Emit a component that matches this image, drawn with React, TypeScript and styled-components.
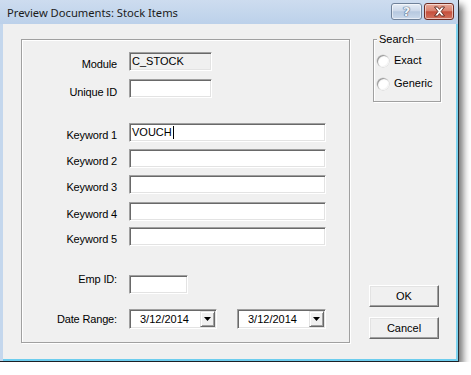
import React from 'react'
import styled, { createGlobalStyle } from 'styled-components'

const GlobalStyle = createGlobalStyle`
    html, body {
        margin: 0;
        padding: 0;
        background: #fff;
    }
    body {
        font-family: "Liberation Sans", Arial, sans-serif;
        font-size: 11px;
        color: #000;
    }
`

const Window = styled.div`
    width: 459px;
    height: 362px;
    box-sizing: border-box;
    display: flex;
    flex-direction: column;
    background: #c4d7ed;
    border-right: 1px solid #2a2f36;
    border-bottom: 1px solid #1c2026;
    box-shadow: 4px 5px 7px rgba(0, 0, 0, 0.55);
`

const TitleBar = styled.div`
    height: 24px;
    flex: none;
    display: flex;
    align-items: flex-start;
    padding: 0 4px 0 7px;
    background: linear-gradient(#cddcef, #bcd1ea);
`

const Title = styled.div`
    font-family: "Noto Sans", "Open Sans", sans-serif;
    font-size: 11.2px;
    line-height: 25px;
    color: #1b1b1b;
`

const CaptionButtons = styled.div`
    margin-left: auto;
    margin-top: 3px;
    display: flex;
    gap: 2px;
`

const CaptionButton = styled.div<{ $close?: boolean }>`
    width: ${p => p.$close ? 30 : 31}px;
    height: 17px;
    box-sizing: border-box;
    border-radius: 3px;
    display: flex;
    align-items: center;
    justify-content: center;
    border: 1px solid ${p => p.$close ? '#6e2b22' : '#6f8199'};
    box-shadow: inset 0 0 0 1px rgba(255, 255, 255, 0.55);
    background: ${p => p.$close
        ? 'linear-gradient(#e9a898, #d98371 45%, #c54f3c 52%, #d2735f)'
        : 'linear-gradient(#e6edf6, #cdd9ea 45%, #b6c8df 52%, #cbd9eb)'};
`

const HelpGlyph = styled.span`
    font-family: "DejaVu Sans", sans-serif;
    font-weight: bold;
    font-size: 13px;
    line-height: 13px;
    color: #eef2f8;
    text-shadow: 0 0 1px #4e6380, 0 0 1px #4e6380, 0 0 1px #4e6380;
`

const Client = styled.div`
    flex: 1;
    margin-left: 3px;
    background: #f0f0f0;
    border-right: 2px solid #7dd3ef;
    border-bottom: 2px solid #6ccdee;
    display: flex;
    align-items: flex-start;
    padding: 9px 0 0 18px;
`

const Panel = styled.div`
    width: 329px;
    height: 304px;
    box-sizing: border-box;
    margin-top: 6px;
    border: 1px solid #a0a0a0;
    box-shadow: inset 1px 1px 0 #fff, 1px 1px 0 #fff;
    display: flex;
    flex-direction: column;
`

const Row = styled.div<{ $top: number; $h?: number }>`
    display: grid;
    grid-template-columns: 95px auto;
    column-gap: 12px;
    align-items: center;
    margin-top: ${p => p.$top}px;
    height: ${p => p.$h ?? 19}px;
`

const Label = styled.div<{ $shift: number }>`
    text-align: right;
    line-height: 13px;
    white-space: nowrap;
    letter-spacing: -0.15px;
    padding-top: ${p => Math.max(0, p.$shift * 2)}px;
    padding-bottom: ${p => Math.max(0, -p.$shift * 2)}px;
`

const Field = styled.div<{ $w: number; $readOnly?: boolean }>`
    width: ${p => p.$w}px;
    height: 19px;
    box-sizing: border-box;
    border: 1px solid;
    border-color: #a0a0a0 #fff #fff #a0a0a0;
    box-shadow: inset 1px 1px 0 #696969, inset -1px -1px 0 #e3e3e3;
    background: ${p => p.$readOnly ? '#f0f0f0' : '#fff'};
    padding-left: 2px;
    display: flex;
    align-items: center;
    line-height: 13px;
    white-space: nowrap;
`

const Caret = styled.span`
    display: inline-block;
    width: 1px;
    height: 13px;
    background: #000;
    margin-left: 1px;
`

const DatePair = styled.div`
    display: flex;
    gap: 20px;
`

const DateBox = styled.div<{ $w: number }>`
    width: ${p => p.$w}px;
    height: 20px;
    box-sizing: border-box;
    border: 1px solid;
    border-color: #a0a0a0 #fff #fff #a0a0a0;
    box-shadow: inset 1px 1px 0 #696969, inset -1px -1px 0 #e3e3e3;
    background: #fff;
    display: flex;
    align-items: center;
    padding: 1px 1px 1px 10px;
`

const DateText = styled.div`
    flex: 1;
    line-height: 13px;
`

const DropButton = styled.div`
    width: 15px;
    height: 16px;
    box-sizing: border-box;
    background: #f0f0f0;
    border: 1px solid;
    border-color: #e3e3e3 #696969 #696969 #e3e3e3;
    box-shadow: inset 1px 1px 0 #fff, inset -1px -1px 0 #a0a0a0;
    display: flex;
    align-items: center;
    justify-content: center;
`

const Side = styled.div`
    width: 72px;
    height: 310px;
    box-sizing: border-box;
    margin-left: 19px;
    display: flex;
    flex-direction: column;
    padding-bottom: 4px;
`

const GroupBox = styled.fieldset`
    margin: 0 0 0 4px;
    width: 68px;
    height: 69px;
    min-width: 0;
    box-sizing: border-box;
    padding: 8px 0 0 3px;
    border: 1px solid #a0a0a0;
    box-shadow: inset 1px 1px 0 #fff, 1px 1px 0 #fff;
    display: flex;
    flex-direction: column;
    gap: 10px;
`

const Legend = styled.legend`
    padding: 0 2px;
    line-height: 13px;
    font-size: 11px;
    background: #f0f0f0;
`

const RadioRow = styled.label`
    display: flex;
    align-items: center;
    gap: 5px;
    height: 13px;
    line-height: 13px;
`

const RadioCircle = styled.span`
    width: 12px;
    height: 12px;
    box-sizing: border-box;
    border-radius: 50%;
    background: radial-gradient(circle at 60% 60%, #fff 45%, #e6e6e6 75%);
    box-shadow: inset 1px 1px 0 #9c9c9c, inset -1px -1px 0 #f4f4f4, 0 0 0 0.5px #d0d0d0;
`

const ButtonStack = styled.div`
    margin-top: auto;
    display: flex;
    flex-direction: column;
    gap: 10px;
`

const PushButton = styled.div`
    width: 70px;
    height: 22px;
    box-sizing: border-box;
    background: #f0f0f0;
    border: 1px solid;
    border-color: #fff #696969 #696969 #fff;
    box-shadow: inset -1px -1px 0 #a0a0a0, inset 1px 1px 0 #e3e3e3;
    display: flex;
    align-items: center;
    justify-content: center;
    line-height: 13px;
`

const keywords = ['Keyword 1', 'Keyword 2', 'Keyword 3', 'Keyword 4', 'Keyword 5']
const keywordGaps = [26, 7, 7, 8, 6]

const CloseGlyph: React.FC = () => (
    <svg width="13" height="11" viewBox="0 0 13 11">
        <path d="M1.5 1 H4.6 L6.5 3.4 L8.4 1 H11.5 L8.1 5.5 L11.5 10 H8.4 L6.5 7.6 L4.6 10 H1.5 L4.9 5.5 Z"
            fill="#fff" stroke="#5a2219" strokeWidth="0.9" strokeLinejoin="round" />
    </svg>
)

const DownArrow: React.FC = () => (
    <svg width="7" height="4" viewBox="0 0 7 4">
        <path d="M0 0 H7 L3.5 4 Z" fill="#000" />
    </svg>
)

const App: React.FC = () => {
    return <>
        <GlobalStyle />
        <Window>
            <TitleBar>
                <Title>Preview Documents: Stock Items</Title>
                <CaptionButtons>
                    <CaptionButton><HelpGlyph>?</HelpGlyph></CaptionButton>
                    <CaptionButton $close><CloseGlyph /></CaptionButton>
                </CaptionButtons>
            </TitleBar>
            <Client>
                <Panel>
                    <Row $top={12}>
                        <Label $shift={3}>Module</Label>
                        <Field $w={83} $readOnly>C_STOCK</Field>
                    </Row>
                    <Row $top={7}>
                        <Label $shift={4}>Unique ID</Label>
                        <Field $w={83} />
                    </Row>
                    {keywords.map((k, i) =>
                        <Row key={k} $top={keywordGaps[i]}>
                            <Label $shift={3}>{k}</Label>
                            <Field $w={197}>
                                {i === 0 && <>VOUCH<Caret /></>}
                            </Field>
                        </Row>
                    )}
                    <Row $top={27}>
                        <Label $shift={-5}>Emp ID:</Label>
                        <Field $w={59} />
                    </Row>
                    <Row $top={17} $h={20}>
                        <Label $shift={0}>Date Range:</Label>
                        <DatePair>
                            <DateBox $w={88}>
                                <DateText>3/12/2014</DateText>
                                <DropButton><DownArrow /></DropButton>
                            </DateBox>
                            <DateBox $w={89}>
                                <DateText>3/12/2014</DateText>
                                <DropButton><DownArrow /></DropButton>
                            </DateBox>
                        </DatePair>
                    </Row>
                </Panel>
                <Side>
                    <GroupBox>
                        <Legend>Search</Legend>
                        <RadioRow><RadioCircle />Exact</RadioRow>
                        <RadioRow><RadioCircle />Generic</RadioRow>
                    </GroupBox>
                    <ButtonStack>
                        <PushButton>OK</PushButton>
                        <PushButton>Cancel</PushButton>
                    </ButtonStack>
                </Side>
            </Client>
        </Window>
    </>
}

export default App
